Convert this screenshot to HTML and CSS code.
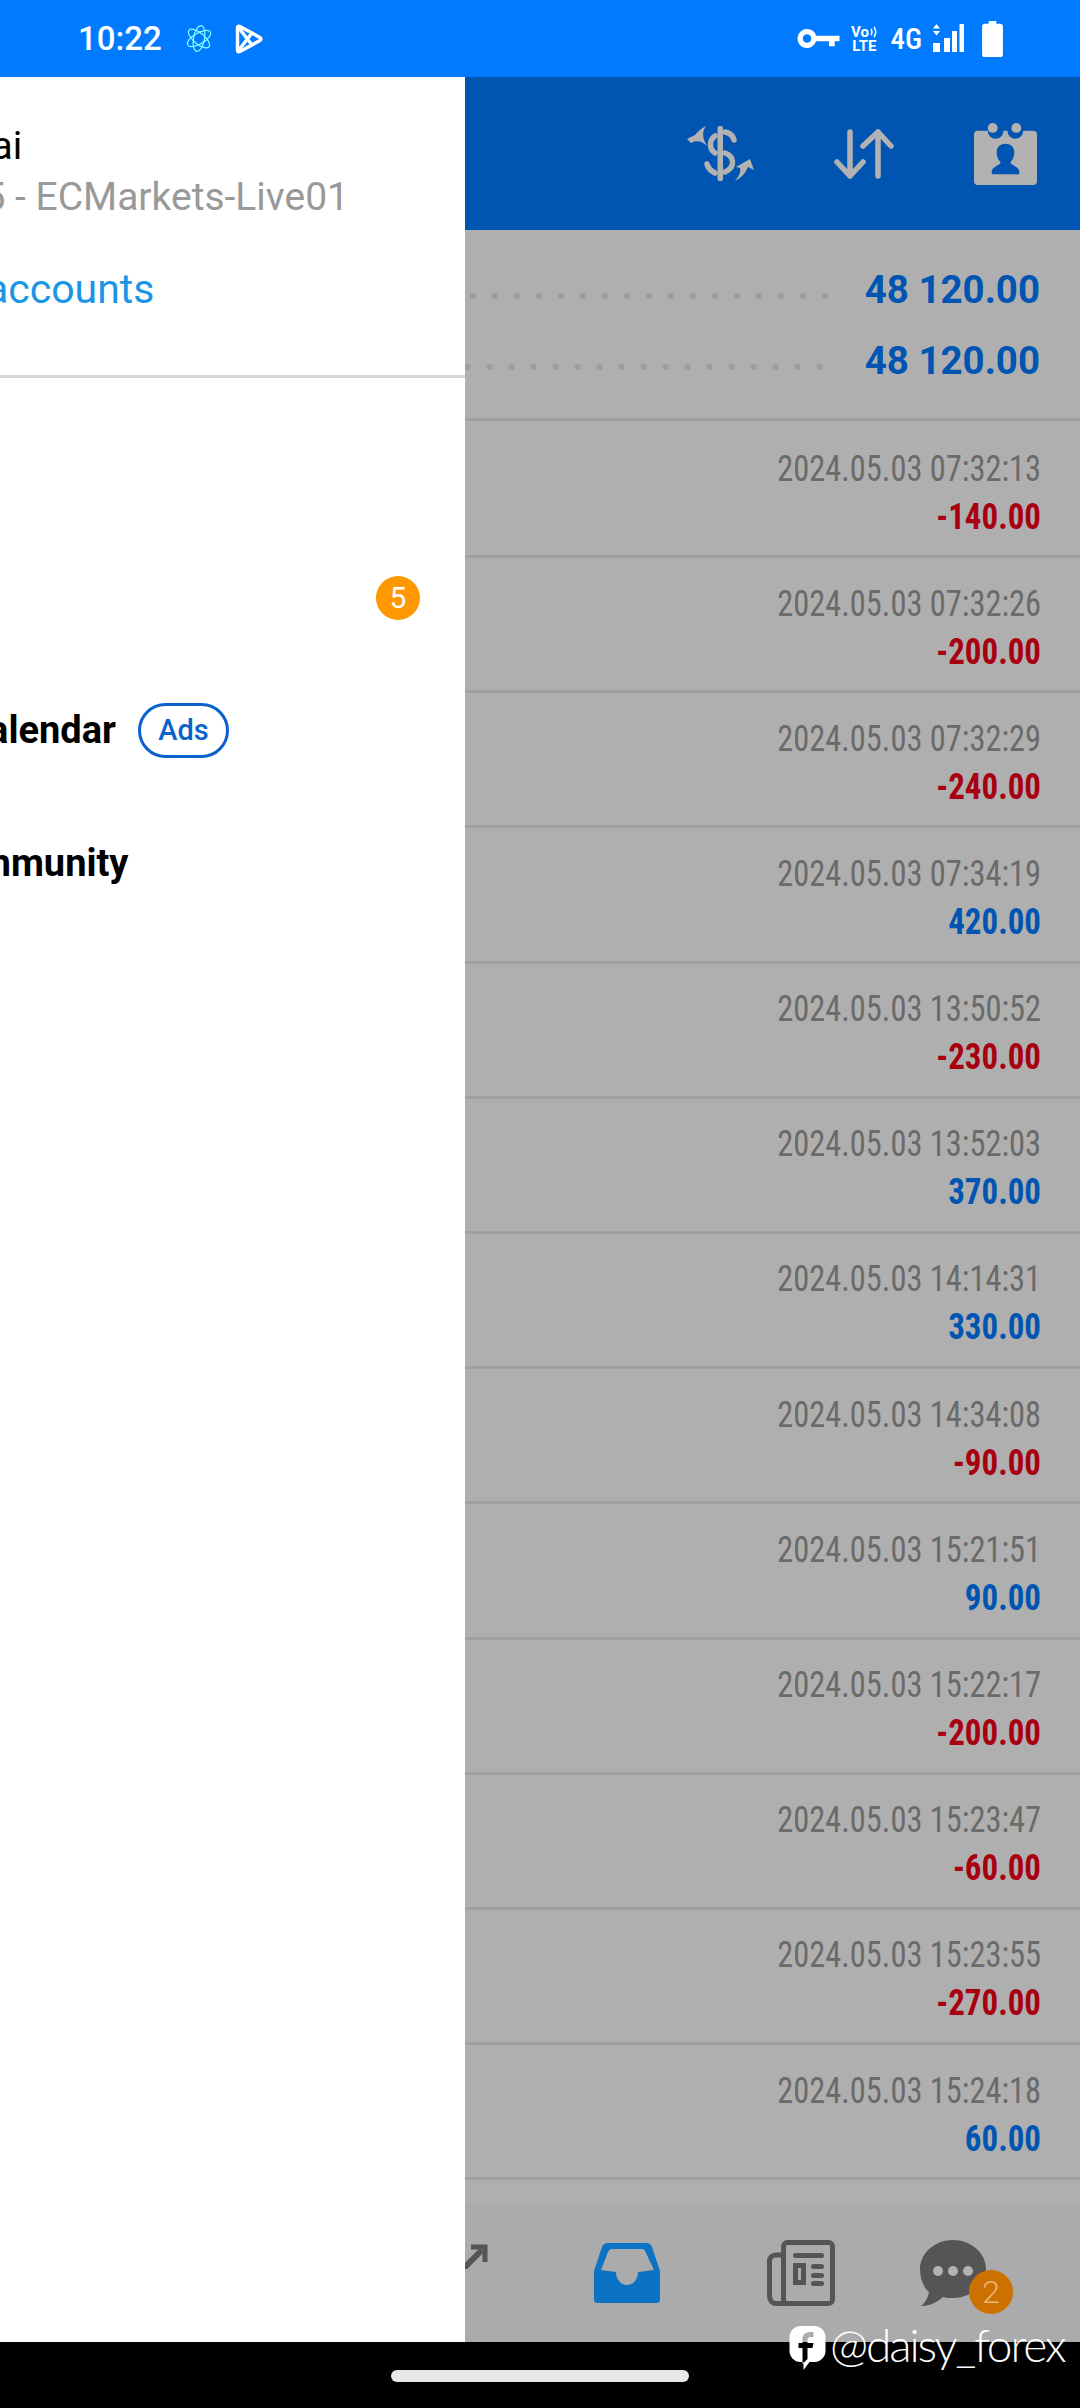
FILE: index.html
```html
<!DOCTYPE html>
<html lang="en">
<head>
    <meta charset="UTF-8">
    <title>Trading history</title>
    <link rel="stylesheet" href="styles.css">
</head>
<body>
    <div class="status-bar">
        <div class="status-left">
            <span class="clock">10:22</span>
            <svg class="st-atom" viewBox="0 0 24 27" fill="none" stroke="#8ff" stroke-width="1.200"><ellipse cx="12" cy="13.500" rx="13" ry="5.500" transform="rotate(40 12 13.500)"/><ellipse cx="12" cy="13.500" rx="13" ry="5.500" transform="rotate(100 12 13.500)"/><ellipse cx="12" cy="13.500" rx="13" ry="5.500" transform="rotate(150 12 13.500)"/></svg>
            <svg class="st-play" viewBox="0 0 28 30" fill="none" stroke="#fff" stroke-width="3.400" stroke-linejoin="round" stroke-linecap="round"><path d="M2.500 3.500Q2.500 1.500 5 2.500L25 13.500Q27 15 25 16.500L5 27.500Q2.500 28.500 2.500 26.500Z"/><path d="M3.500 3.500 17 21M3.500 26.500 17 9"/></svg>
        </div>
        <div class="status-right">
            <svg class="st-key" viewBox="0 0 46 22" fill="#fff"><path d="M11 1a10 10 0 0 1 9.500 7H45v6h-5v5h-6v-5H20.500A10 10 0 1 1 11 1zm0 5.500a4.500 4.500 0 1 0 0 9 4.500 4.500 0 0 0 0-9z"/></svg>
            <div class="st-volte">
                <div class="vo-line">Vo<svg class="vo-waves" viewBox="0 0 8 14" fill="none" stroke="#fff" stroke-width="1.500"><path d="M1 4q2 3 0 6M4 2q3.500 5 0 10"/></svg></div>
                <div>LTE</div>
            </div>
            <span class="st-4g">4G</span>
            <svg class="st-signal" viewBox="0 0 31 29" fill="#fff"><path d="M3.500 0 7 4.500H0zM0 7h7l-3.500 4.500zM0 19h7v9H0zM11 14h6v14h-6zM19 7h5v21h-5zM26.500 0h4.500v28h-4.500z"/></svg>
            <svg class="st-battery" viewBox="0 0 22 38" fill="#fff"><path d="M7 0h8v3h4a3 3 0 0 1 3 3v29a3 3 0 0 1-3 3H3a3 3 0 0 1-3-3V6a3 3 0 0 1 3-3h4z"/></svg>
        </div>
    </div>

    <div class="screen">
        <aside class="drawer">
            <div class="account">
                <div class="acc-name">Daisy Thai</div>
                <div class="acc-server">1102875 - ECMarkets-Live01</div>
                <div class="acc-manage">Manage accounts</div>
            </div>
            <div class="menu">
                <div class="menu-row">Journal</div>
                <div class="menu-row">Mailbox<span class="menu-badge">5</span></div>
                <div class="menu-row">Economic Calendar<span class="ads">Ads</span></div>
                <div class="menu-row community">Traders Community</div>
            </div>
        </aside>

        <main class="app">
            <header class="app-bar">
                <svg class="ic-dollar" viewBox="0 0 67 55">
                    <g fill="#b2b2b2">
                        <rect x="30.500" y="0" width="5.500" height="55" rx="2"/>
                        <path d="M0 13 8 9C11 5 15 2 19 0 15 6 15 11 20 20 15 15 9 14 4 17Z"/>
                        <path d="M48 55C52 50 54 46 53 42L49 41 63 33 67 44 61 41C58 48 54 52 48 55Z"/>
                    </g>
                    <g fill="none" stroke="#b2b2b2" stroke-width="5.500" stroke-linecap="round">
                        <path d="M28 10C22 14 22 23 28 27"/>
                        <path d="M38 6C43 7 46 10 47 14"/>
                        <path d="M38 27C47 30 49 41 38 46"/>
                        <path d="M20 38C21 42 24 45 28 47"/>
                    </g>
                </svg>
                <svg class="ic-arrows" viewBox="0 0 60 50" fill="none" stroke="#b2b2b2" stroke-width="5.500" stroke-linecap="round" stroke-linejoin="round"><path d="M16 3v44M3 33l13 14 13-14"/><path d="M44 47V3M29 17 44 3l13 14"/></svg>
                <svg class="ic-contact" viewBox="0 0 64 64" fill="#b2b2b2"><path fill-rule="evenodd" d="M4 9h10a8 8 0 0 0 16 0h4a8 8 0 0 0 16 0h10a4 4 0 0 1 4 4v47a4 4 0 0 1-4 4H4a4 4 0 0 1-4-4V13a4 4 0 0 1 4-4zM32 22c-6 0-9 4-9 9 0 4 2 8 4 10 0 3-8 4-9 9v3h28v-3c-1-5-9-6-9-9 2-2 4-6 4-10 0-5-3-9-9-9z"/><circle cx="19" cy="6" r="5"/><circle cx="43" cy="6" r="5"/></svg>
            </header>

            <section class="summary">
                <div class="sum-row"><span class="dots first"></span><span class="sum-val">48 120.00</span></div>
                <div class="sum-row"><span class="dots"></span><span class="sum-val">48 120.00</span></div>
            </section>

            <div class="deals">
                <div class="deal"><div class="when">2024.05.03 07:32:13</div><div class="amt neg">-140.00</div></div>
                <div class="deal"><div class="when">2024.05.03 07:32:26</div><div class="amt neg">-200.00</div></div>
                <div class="deal"><div class="when">2024.05.03 07:32:29</div><div class="amt neg">-240.00</div></div>
                <div class="deal"><div class="when">2024.05.03 07:34:19</div><div class="amt pos">420.00</div></div>
                <div class="deal"><div class="when">2024.05.03 13:50:52</div><div class="amt neg">-230.00</div></div>
                <div class="deal"><div class="when">2024.05.03 13:52:03</div><div class="amt pos">370.00</div></div>
                <div class="deal"><div class="when">2024.05.03 14:14:31</div><div class="amt pos">330.00</div></div>
                <div class="deal"><div class="when">2024.05.03 14:34:08</div><div class="amt neg">-90.00</div></div>
                <div class="deal"><div class="when">2024.05.03 15:21:51</div><div class="amt pos">90.00</div></div>
                <div class="deal"><div class="when">2024.05.03 15:22:17</div><div class="amt neg">-200.00</div></div>
                <div class="deal"><div class="when">2024.05.03 15:23:47</div><div class="amt neg">-60.00</div></div>
                <div class="deal"><div class="when">2024.05.03 15:23:55</div><div class="amt neg">-270.00</div></div>
                <div class="deal"><div class="when">2024.05.03 15:24:18</div><div class="amt pos">60.00</div></div>
            </div>

            <nav class="tabs">
                <svg class="tab-trade" viewBox="0 0 24 26" fill="none" stroke="#555" stroke-width="6"><path d="M-4 28 17 7"/><path d="M6 4h14v15" stroke-width="5"/></svg>
                <svg class="tab-inbox" viewBox="0 0 66 60" fill="#0b72c4"><path fill-rule="evenodd" d="M14 0h38c3 0 5 1 6 4l6 18c1 3 2 5 2 8v26c0 3-1 4-4 4H4c-3 0-4-1-4-4V30c0-3 1-5 2-8L8 4c1-3 3-4 6-4zM18 6c-2 0-3 1-4 3L7 27c5 1 10 1 15 2a11 13 0 0 0 22 0c5-1 11-1 16-2L51.500 9c-.5-2-1.500-3-3.500-3z"/></svg>
                <svg class="tab-news" viewBox="0 0 68 66">
                    <g fill="none" stroke="#555" stroke-width="5">
                        <rect x="16.500" y="2.500" width="49" height="61" rx="4"/>
                        <path d="M14 15H9c-4 0-6.500 3-6.500 6v35c0 5 3 7.500 7 7.500h10"/>
                    </g>
                    <g fill="#555">
                        <rect x="26" y="13" width="31" height="5" rx="2.500"/>
                        <path fill-rule="evenodd" d="M26 23h13v22H26zM31 28v12h3V28z"/>
                        <rect x="44" y="24" width="13" height="5" rx="2.500"/>
                        <rect x="44" y="33" width="13" height="5" rx="2.500"/>
                        <rect x="44" y="41" width="13" height="5" rx="2.500"/>
                    </g>
                </svg>
                <div class="tab-chat">
                    <svg class="chat-bubble" viewBox="0 0 66 66"><path fill="#555" d="M33 0c18 0 33 13 33 29S51 58 33 58c-4 0-7 0-10-1-4 4-12 9-22 9 4-3 7-8 8-14C3 47 0 38 0 29 0 13 15 0 33 0z"/><g fill="#b2b2b2"><circle cx="18" cy="31" r="5"/><circle cx="33" cy="31" r="5"/><circle cx="48" cy="31" r="5"/></g></svg>
                    <span class="chat-badge">2</span>
                </div>
            </nav>
        </main>
    </div>

    <div class="nav-bar"><div class="home-pill"></div></div>

    <div class="watermark">
        <svg class="wm-logo" viewBox="0 0 36 44" fill="#fff"><path fill-rule="evenodd" d="M11 0h14c6 0 11 5 11 11v14c0 6-5 11-11 11h-5l-6 8v-8h-3C5 36 0 31 0 25V11C0 5 5 0 11 0zm10 6c-5 0-8 3-8 7v4H9v5h4v16l5-5V22h5l1-5h-6v-3c0-2 1-3 3-3h3V6z"/></svg>
        <span class="wm-text">@daisy_forex</span>
    </div>
</body>
</html>
```

FILE: styles.css
```css
* {
    box-sizing: border-box;
}
html, body {
    margin: 0;
    padding: 0;
}
body {
    width: 1080px;
    height: 2408px;
    overflow: hidden;
    position: relative;
    display: flex;
    flex-direction: column;
    font-family: Roboto, "Liberation Sans", sans-serif;
    background: #000;
}
svg {
    display: block;
    flex: none;
}

/* status bar */
.status-bar {
    height: 77px;
    flex: none;
    background: #007bff;
    color: #fff;
    display: flex;
    align-items: center;
    justify-content: space-between;
    padding: 0 77px 0 78px;
}
.status-left, .status-right {
    display: flex;
    align-items: center;
}
.clock {
    font-size: 33px;
    font-weight: 500;
}
.st-atom {
    width: 24px;
    height: 27px;
    margin-left: 25px;
    overflow: visible;
}
.st-play {
    width: 28px;
    height: 30px;
    margin-left: 24px;
}
.st-key {
    width: 45px;
    height: 21px;
}
.st-volte {
    font-size: 15px;
    font-weight: 700;
    line-height: 14px;
    text-align: center;
    width: 28px;
    margin-left: 9px;
}
.vo-line {
    display: flex;
    justify-content: center;
    align-items: center;
}
.vo-waves {
    width: 8px;
    height: 14px;
    margin-left: 1px;
}
.st-4g {
    font-size: 29px;
    font-weight: 500;
    margin-left: 12px;
    font-stretch: 75%;
}
.st-signal {
    width: 31px;
    height: 29px;
    margin-left: 11px;
}
.st-battery {
    width: 21px;
    height: 36px;
    margin-left: 18px;
}

/* main area */
.screen {
    flex: 1;
    display: flex;
    min-height: 0;
}
.drawer {
    width: 465px;
    flex: none;
    background: #fff;
    overflow: hidden;
    white-space: nowrap;
}
.account {
    height: 301px;
    margin-left: -148px;
    border-bottom: 3px solid #d8d8d8;
    padding-top: 44px;
}
.acc-name {
    font-size: 39px;
    line-height: 50px;
    margin-left: -9px;
    color: #000;
}
.acc-server {
    font-size: 39px;
    line-height: 50px;
    margin-top: 1px;
    color: #999;
}
.acc-manage {
    font-size: 41px;
    line-height: 50px;
    margin-top: 42px;
    margin-left: -24px;
    color: #1b96e6;
}
.menu {
    margin-left: -214px;
    padding-top: 21px;
}
.menu-row {
    height: 132.500px;
    display: flex;
    align-items: center;
    font-size: 38px;
    font-weight: 700;
    color: #000;
    position: relative;
}
.community {
    padding-left: 5px;
}
.menu-badge {
    position: absolute;
    left: 590px;
    top: 44px;
    width: 44px;
    height: 44px;
    border-radius: 50%;
    background: #ff9800;
    color: #fff;
    font-size: 30px;
    font-weight: 400;
    display: flex;
    align-items: center;
    justify-content: center;
}
.ads {
    margin-left: 22px;
    width: 91px;
    height: 55px;
    border: 3px solid #0a62cc;
    border-radius: 28px;
    color: #0a62cc;
    font-size: 29px;
    font-weight: 500;
    display: flex;
    align-items: center;
    justify-content: center;
}

/* app behind the drawer */
.app {
    flex: 1;
    min-width: 0;
    display: flex;
    flex-direction: column;
    background: #afafaf;
    overflow: hidden;
}
.app-bar {
    height: 153px;
    flex: none;
    background: #0055b2;
    display: flex;
    align-items: center;
    justify-content: flex-end;
    padding: 0 43px 0 0;
}
.ic-dollar {
    width: 67px;
    height: 55px;
}
.ic-arrows {
    width: 60px;
    height: 50px;
    margin-left: 80px;
}
.ic-contact {
    width: 63px;
    height: 63px;
    margin-left: 80px;
}
.summary {
    height: 190.500px;
    flex: none;
    border-bottom: 3px solid #a0a0a0;
    padding: 24px 40px 0 0;
}
.sum-row {
    height: 71px;
    display: flex;
    align-items: center;
}
.dots {
    flex: 1;
    height: 6px;
    margin: 12px 34px 0 0;
    background-image: radial-gradient(circle, #9d9d9d 3px, transparent 3.500px);
    background-size: 22px 6px;
    background-position: right center;
}
.dots.first {
    margin-right: 29px;
}
.sum-val {
    font-size: 38.500px;
    font-weight: 700;
    color: #0055b2;
}
.deals {
    flex: 1;
    min-height: 0;
}
.deal {
    height: 135.200px;
    border-bottom: 3px solid #a0a0a0;
    padding: 21.500px 39px 0 0;
    text-align: right;
}
.deal:first-child {
    height: 137.500px;
    padding-top: 24.500px;
}
.when, .amt {
    font-size: 37px;
    line-height: 48px;
    font-stretch: 75%;
    transform-origin: right center;
}
.when {
    color: #6a6a6a;
    transform: scaleX(0.876);
}
.amt {
    font-weight: 700;
    transform: scaleX(0.89);
}
.neg {
    color: #a80010;
}
.pos {
    color: #0055b2;
}
.tabs {
    height: 137px;
    flex: none;
    background: #ababab;
    display: flex;
    padding-top: 35px;
}
.tab-trade {
    width: 24px;
    height: 26px;
    margin-top: 3px;
}
.tab-inbox {
    width: 66px;
    height: 60px;
    margin: 3px 0 0 105px;
}
.tab-news {
    width: 68px;
    height: 66px;
    margin-left: 107px;
}
.tab-chat {
    position: relative;
    margin-left: 85px;
}
.chat-bubble {
    width: 66px;
    height: 66px;
}
.chat-badge {
    position: absolute;
    left: 49px;
    top: 30px;
    width: 44px;
    height: 44px;
    border-radius: 50%;
    background: #cc7000;
    color: #e6b57a;
    font-size: 32px;
    font-weight: 300;
    display: flex;
    align-items: center;
    justify-content: center;
}

/* bottom nav bar */
.nav-bar {
    height: 66px;
    flex: none;
    background: #000;
    display: flex;
    justify-content: center;
    padding-top: 28px;
}
.home-pill {
    width: 298px;
    height: 12px;
    border-radius: 6px;
    background: #e8e8e8;
}

/* watermark on top of everything */
.watermark {
    position: absolute;
    left: 789px;
    top: 2317px;
    display: flex;
    align-items: center;
    color: #fff;
}
.wm-logo {
    width: 37px;
    height: 44px;
    margin-top: 6px;
}
.wm-text {
    font-family: Lato, sans-serif;
    font-weight: 300;
    font-size: 46px;
    letter-spacing: -2.100px;
    margin-left: 4px;
}
```
